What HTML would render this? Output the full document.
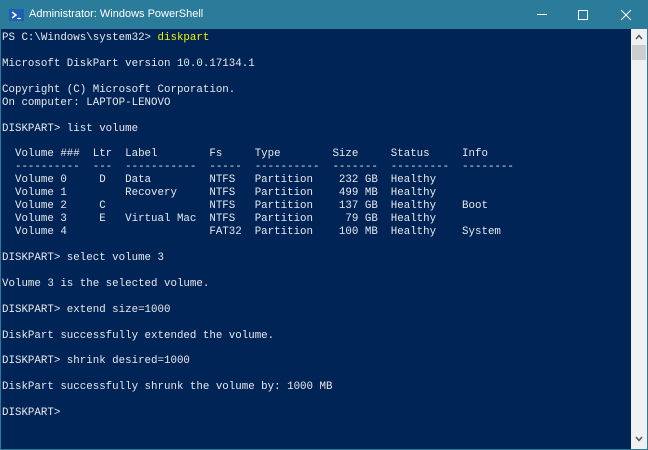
<!DOCTYPE html>
<html><head><meta charset="utf-8"><style>
html,body{margin:0;padding:0;width:648px;height:450px;overflow:hidden;background:#2b7b9a}
.title{position:absolute;left:0;top:0;width:648px;height:29px;background:#2b7b9a;color:#fff;font:11px "Liberation Sans",sans-serif}
.title .t{position:absolute;left:29px;top:8px}
.con{position:absolute;left:1px;top:29px;width:630px;height:420px;background:#012456}
pre{margin:0;position:absolute;left:1px;top:3px;font:10.8px/12.93px "Liberation Mono",monospace;color:#e8e8ec;white-space:pre}
.y{color:#f2f200}
.sb{position:absolute;left:631px;top:29px;width:16px;height:420px;background:#f0f0f0}
.thumb{position:absolute;left:1px;top:16px;width:14px;height:15px;background:#cdcdcd}
</style></head><body>
<div class="title">
<svg style="position:absolute;left:9px;top:9px" width="15" height="12"><rect width="15" height="12" fill="#1e5fb4"/><path d="M3 3 L7 6 L3 9" stroke="#fff" stroke-width="1.5" fill="none"/><path d="M8 9.5 H12" stroke="#fff" stroke-width="1.2"/></svg>
<span class="t">Administrator: Windows PowerShell</span>
<svg style="position:absolute;left:530px;top:9px" width="110" height="12"><path d="M7 5.5 H17" stroke="#fff" stroke-width="1"/><rect x="48.5" y="1.5" width="9" height="9" stroke="#fff" fill="none"/><path d="M91 1 L101 11 M101 1 L91 11" stroke="#fff" stroke-width="1"/></svg>
</div>
<div class="con"><pre>PS C:\Windows\system32&gt; <span class="y">diskpart</span>

Microsoft DiskPart version 10.0.17134.1

Copyright (C) Microsoft Corporation.
On computer: LAPTOP-LENOVO

DISKPART&gt; list volume

  Volume ###  Ltr  Label        Fs     Type        Size     Status     Info
  ----------  ---  -----------  -----  ----------  -------  ---------  --------
  Volume 0     D   Data         NTFS   Partition    232 GB  Healthy
  Volume 1         Recovery     NTFS   Partition    499 MB  Healthy
  Volume 2     C                NTFS   Partition    137 GB  Healthy    Boot
  Volume 3     E   Virtual Mac  NTFS   Partition     79 GB  Healthy
  Volume 4                      FAT32  Partition    100 MB  Healthy    System

DISKPART&gt; select volume 3

Volume 3 is the selected volume.

DISKPART&gt; extend size=1000

DiskPart successfully extended the volume.

DISKPART&gt; shrink desired=1000

DiskPart successfully shrunk the volume by: 1000 MB

DISKPART&gt;</pre></div>
<div class="sb"><svg style="position:absolute;left:4px;top:5px" width="8" height="6"><path d="M1 5 L4 1.5 L7 5" stroke="#555" stroke-width="1.5" fill="none"/></svg><div class="thumb"></div><svg style="position:absolute;left:4px;top:407px" width="8" height="6"><path d="M1 1 L4 4.5 L7 1" stroke="#555" stroke-width="1.5" fill="none"/></svg></div>
</body></html>
